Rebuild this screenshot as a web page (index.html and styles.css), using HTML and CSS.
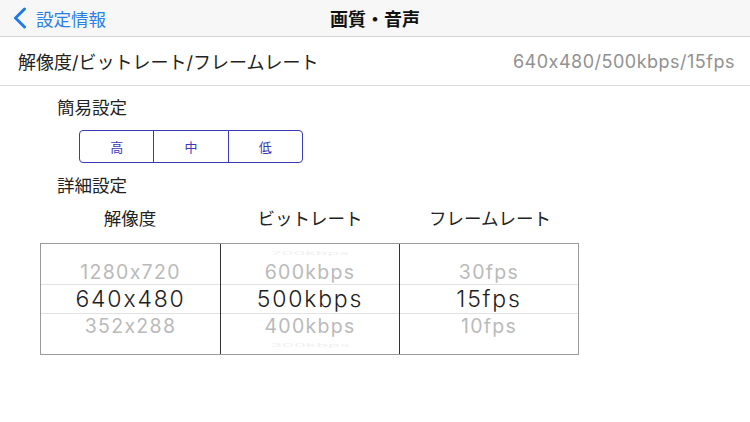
FILE: index.html
```html
<!DOCTYPE html>
<html lang="ja">
<head>
  <meta charset="UTF-8">
  <meta name="viewport" content="width=device-width, initial-scale=1">
  <title>画質・音声</title>
  <link rel="stylesheet" href="styles.css">
</head>
<body>
  <div class="navbar">
    <a class="back">
      <svg class="chevron" width="14" height="22" viewBox="0 0 14 22">
        <polyline points="11.5,2 2.5,11 11.5,20" fill="none" stroke="#1f7ce6" stroke-width="3" stroke-linecap="round" stroke-linejoin="round"/>
      </svg>
      <span>設定情報</span>
    </a>
    <div class="title">画質・音声</div>
  </div>

  <div class="row">
    <div class="row-label">解像度/ビットレート/フレームレート</div>
    <div class="row-value">640x480/500kbps/15fps</div>
  </div>

  <div class="section-title">簡易設定</div>
  <div class="segmented">
    <div class="seg">高</div>
    <div class="seg">中</div>
    <div class="seg">低</div>
  </div>

  <div class="section-title detail">詳細設定</div>
  <div class="picker-heads">
    <div>解像度</div>
    <div>ビットレート</div>
    <div>フレームレート</div>
  </div>
  <div class="picker">
    <div class="wheel">
      <div class="item faint"></div>
      <div class="item near">1280x720</div>
      <div class="item current">640x480</div>
      <div class="item near">352x288</div>
      <div class="item faint"></div>
    </div>
    <div class="wheel">
      <div class="item faint">700kbps</div>
      <div class="item near">600kbps</div>
      <div class="item current">500kbps</div>
      <div class="item near">400kbps</div>
      <div class="item faint">300kbps</div>
    </div>
    <div class="wheel">
      <div class="item faint"></div>
      <div class="item near">30fps</div>
      <div class="item current">15fps</div>
      <div class="item near">10fps</div>
      <div class="item faint"></div>
    </div>
  </div>
</body>
</html>
```

FILE: styles.css
```css
body {
  margin: 0;
  width: 750px;
  height: 422px;
  background: #fff;
  color: #222;
  font-family: "Inter", "Noto Sans CJK JP", sans-serif;
  overflow: hidden;
}

.navbar {
  height: 36px;
  background: #f7f7f7;
  border-bottom: 1px solid #d4d4d6;
  display: flex;
  align-items: center;
  position: relative;
}
.back {
  display: flex;
  align-items: center;
  gap: 9px;
  padding-left: 13px;
  color: #2a80e4;
  font-size: 17.5px;
  font-family: "Noto Sans CJK JP", sans-serif;
}
.title {
  position: absolute;
  left: 0;
  right: 0;
  text-align: center;
  font-size: 18px;
  font-weight: bold;
  color: #111;
  font-family: "Noto Sans CJK JP", sans-serif;
}

.row {
  height: 48px;
  border-bottom: 1px solid #dcdcde;
  display: flex;
  align-items: center;
  justify-content: space-between;
  padding: 0 15px 0 18px;
}
.row-label {
  font-size: 18px;
  color: #222;
}
.row-value {
  font-size: 18px;
  letter-spacing: 0.5px;
  color: #919191;
}

.section-title {
  font-size: 17.5px;
  margin: 12px 0 0 57px;
  line-height: 20px;
}
.section-title.detail {
  margin-top: 13px;
}

.segmented {
  display: flex;
  width: 224px;
  height: 33px;
  margin: 12px 0 0 79px;
  border: 1px solid #3b3bb8;
  border-radius: 4px;
  box-sizing: border-box;
}
.seg {
  flex: 1;
  display: flex;
  align-items: center;
  justify-content: center;
  font-size: 13px;
  color: #3b3bb8;
}
.seg + .seg {
  border-left: 1px solid #3b3bb8;
}

.picker-heads {
  display: grid;
  grid-template-columns: 180px 180px 180px;
  margin: 12px 0 0 40px;
  font-size: 17.5px;
  text-align: center;
  line-height: 22px;
}

.picker {
  display: grid;
  grid-template-columns: 179px 179px 179px;
  width: 539px;
  height: 112px;
  margin: 13px 0 0 40px;
  border: 1px solid #9a9a9a;
  box-sizing: border-box;
}
.wheel {
  display: flex;
  flex-direction: column;
  justify-content: center;
  text-align: center;
}
.wheel + .wheel {
  border-left: 1px solid #333;
}
.item {
  display: flex;
  align-items: center;
  justify-content: center;
}
.item.faint {
  height: 14px;
  font-size: 19px;
  color: #f0f0f0;
  transform: scaleY(0.25);
}
.item.near {
  height: 24px;
  font-size: 19.5px;
  letter-spacing: 1.3px;
  color: #bababa;
}
.item.current {
  height: 30px;
  font-size: 23px;
  font-weight: 300;
  letter-spacing: 1.8px;
  color: #1e1e1e;
  border-top: 1px solid #e2e2e2;
  border-bottom: 1px solid #e2e2e2;
  box-sizing: border-box;
}
```
